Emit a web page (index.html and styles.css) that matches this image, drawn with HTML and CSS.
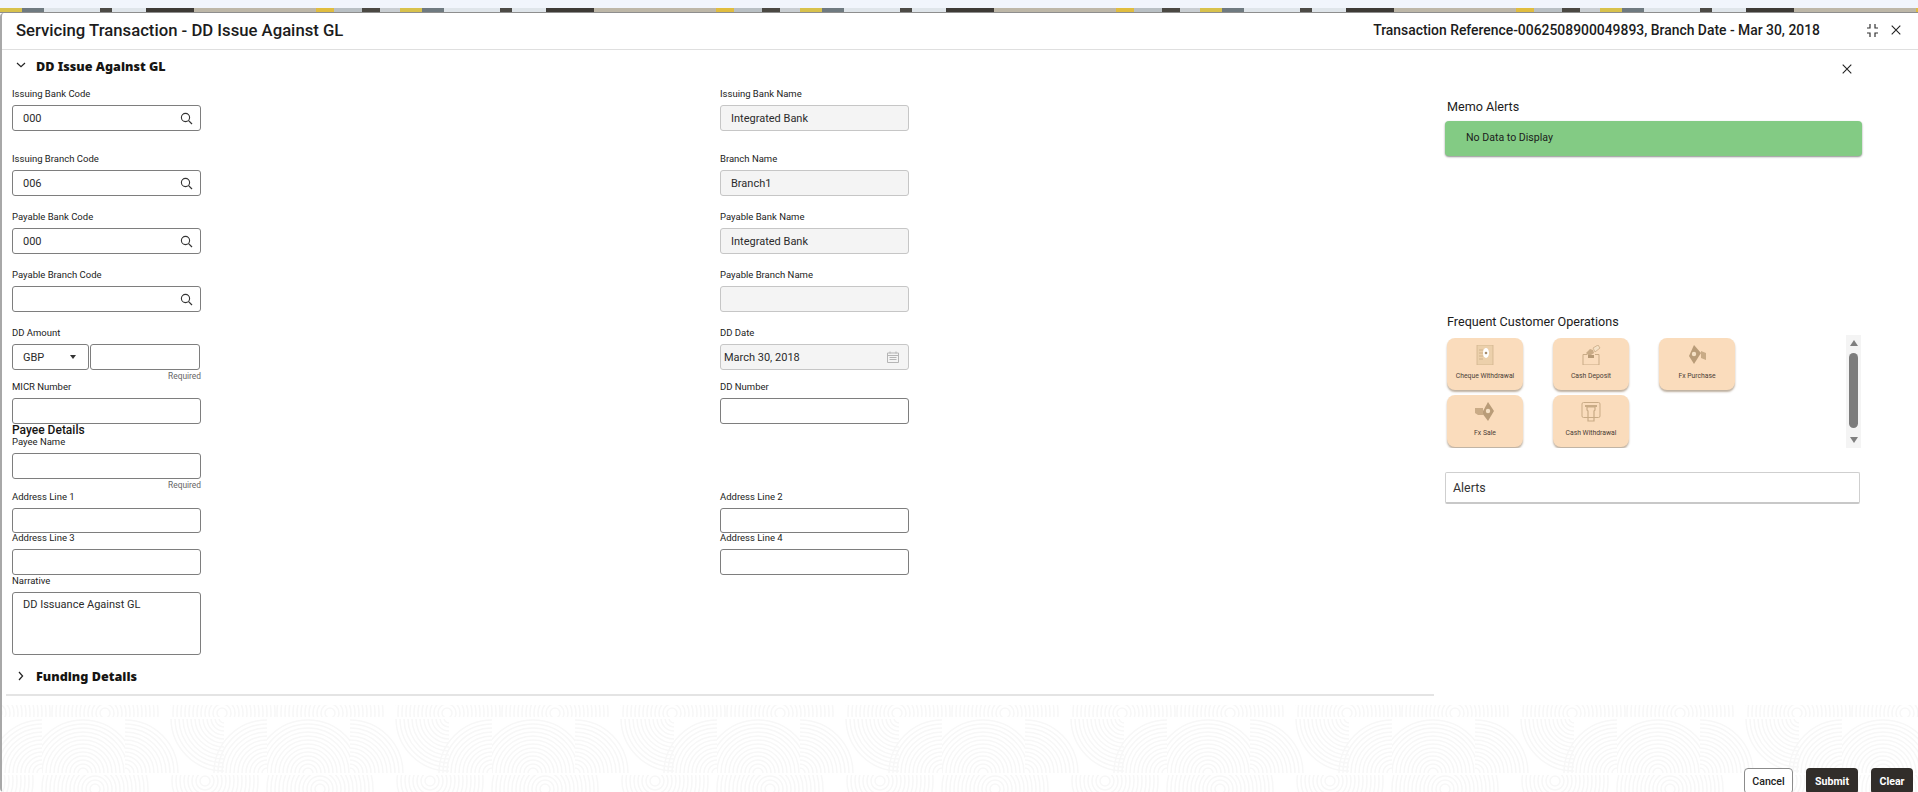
FILE: index.html
```html
<!DOCTYPE html>
<html lang="en">
<head>
<meta charset="utf-8">
<title>Servicing Transaction - DD Issue Against GL</title>
<link rel="stylesheet" href="styles.css">
</head>
<body>
<svg class="defs" width="0" height="0" aria-hidden="true">
  <defs>
    <symbol id="i-search" viewBox="0 0 13 13"><circle cx="5.5" cy="5.5" r="4.1" fill="none" stroke="#333" stroke-width="1.1"/><path d="M8.6 8.6 12 12" stroke="#333" stroke-width="1.2" fill="none"/></symbol>
    <symbol id="i-close" viewBox="0 0 10 10"><path d="M.7.7l8.6 8.6M9.3.7.7 9.3" stroke="#222" stroke-width="1.1" fill="none"/></symbol>
    <g id="rings" fill="none" stroke="#f7f7f7" stroke-width="1.5">
      <circle r="5"/><circle r="9"/><circle r="13"/><circle r="17"/><circle r="21"/><circle r="25"/><circle r="29"/><circle r="33"/><circle r="37"/><circle r="41"/><circle r="45"/><circle r="49"/><circle r="53"/>
    </g>
    <clipPath id="c1"><rect x="0" y="14" width="54" height="54"/></clipPath>
    <clipPath id="c2"><rect x="42" y="14" width="55" height="54"/></clipPath>
    <clipPath id="c3"><rect x="97" y="14" width="83" height="54"/></clipPath>
    <clipPath id="c4"><rect x="180" y="14" width="45" height="54"/></clipPath>
    <clipPath id="c5"><rect x="0" y="14" width="12" height="54"/></clipPath>
    <clipPath id="top"><rect x="0" y="0" width="225" height="12"/></clipPath>
    <clipPath id="bot"><rect x="0" y="70" width="225" height="17"/></clipPath>
    <pattern id="swirl" width="225" height="87" patternUnits="userSpaceOnUse" patternTransform="translate(168 0)">
      <g clip-path="url(#c1)"><use href="#rings" x="54" y="13"/></g>
      <g clip-path="url(#c2)"><use href="#rings" x="97" y="68"/></g>
      <g clip-path="url(#c3)"><use href="#rings" x="138" y="68"/></g>
      <g clip-path="url(#c4)"><use href="#rings" x="180" y="68"/></g>
      <g clip-path="url(#c5)"><use href="#rings" x="-45" y="68"/></g>
      <g clip-path="url(#top)"><use href="#rings" x="52" y="8"/><use href="#rings" x="160" y="8"/></g>
      <g clip-path="url(#bot)"><use href="#rings" x="35" y="76"/><use href="#rings" x="150" y="84"/></g>
    </pattern>
  </defs>
</svg>

<div class="banner"><div class="sky"></div><div class="photo"></div></div>

<div class="window">
  <header class="titlebar">
    <h1 class="title">Servicing Transaction - DD Issue Against GL</h1>
    <div class="meta">Transaction Reference-0062508900049893, Branch Date - Mar 30, 2018</div>
    <div class="win-tools">
      <svg class="i-collapse" viewBox="0 0 15 13" width="15" height="13"><path d="M5 0v4H2M10 0v4h3M5 13V9H2M10 13V9h3" fill="none" stroke="#333" stroke-width="1.2"/></svg>
      <svg class="i-x" width="10" height="10"><use href="#i-close"/></svg>
    </div>
  </header>

  <div class="content">
    <main class="main">
      <div class="section-head">
        <svg class="chev" viewBox="0 0 10 10" width="10" height="10"><path d="M1 3l4 3.6L9 3" fill="none" stroke="#222" stroke-width="1.2"/></svg>
        <h2 class="section-title">DD Issue Against GL</h2>
      </div>

      <div class="row r1">
        <div class="field"><div class="label">Issuing Bank Code</div><div class="control">000<svg class="i-search" width="13" height="13"><use href="#i-search"/></svg></div></div>
        <div class="field"><div class="label">Issuing Bank Name</div><div class="control ro">Integrated Bank</div></div>
      </div>
      <div class="row r2">
        <div class="field"><div class="label">Issuing Branch Code</div><div class="control">006<svg class="i-search" width="13" height="13"><use href="#i-search"/></svg></div></div>
        <div class="field"><div class="label">Branch Name</div><div class="control ro">Branch1</div></div>
      </div>
      <div class="row r3">
        <div class="field"><div class="label">Payable Bank Code</div><div class="control">000<svg class="i-search" width="13" height="13"><use href="#i-search"/></svg></div></div>
        <div class="field"><div class="label">Payable Bank Name</div><div class="control ro">Integrated Bank</div></div>
      </div>
      <div class="row r3">
        <div class="field"><div class="label">Payable Branch Code</div><div class="control"><svg class="i-search" width="13" height="13"><use href="#i-search"/></svg></div></div>
        <div class="field"><div class="label">Payable Branch Name</div><div class="control ro"></div></div>
      </div>
      <div class="row r3">
        <div class="field">
          <div class="label">DD Amount</div>
          <div class="amount">
            <div class="control select">GBP<span class="caret"></span></div>
            <div class="control value"></div>
          </div>
          <div class="hint">Required</div>
        </div>
        <div class="field"><div class="label">DD Date</div><div class="control ro date">March 30, 2018
          <svg class="i-cal" viewBox="0 0 12 12" width="12" height="12"><path d="M.5 2h11v9.5H.5zM.5 4.5h11M3 .5v2M9 .5v2M2.5 6.5h7M2.5 8.5h7" fill="none" stroke="#b5b5b5"/></svg></div></div>
      </div>
      <div class="row">
        <div class="field"><div class="label">MICR Number</div><div class="control"></div></div>
        <div class="field"><div class="label">DD Number</div><div class="control"></div></div>
      </div>
      <h3 class="subhead">Payee Details</h3>
      <div class="row">
        <div class="field"><div class="label">Payee Name</div><div class="control"></div><div class="hint">Required</div></div>
      </div>
      <div class="row r-addr">
        <div class="field"><div class="label">Address Line 1</div><div class="control"></div></div>
        <div class="field"><div class="label">Address Line 2</div><div class="control"></div></div>
      </div>
      <div class="row">
        <div class="field"><div class="label">Address Line 3</div><div class="control"></div></div>
        <div class="field"><div class="label">Address Line 4</div><div class="control"></div></div>
      </div>
      <div class="row r-narr">
        <div class="field"><div class="label">Narrative</div><div class="control area">DD Issuance Against GL</div></div>
      </div>

      <div class="section-head funding">
        <svg class="chev" viewBox="0 0 10 10" width="10" height="10"><path d="M3 1l3.6 4L3 9" fill="none" stroke="#222" stroke-width="1.2"/></svg>
        <h2 class="section-title">Funding Details</h2>
      </div>
    </main>

    <aside class="side">
      <div class="side-close"><svg width="10" height="10"><use href="#i-close"/></svg></div>
      <div class="side-title memo-title">Memo Alerts</div>
      <div class="memo-box">No Data to Display</div>
      <div class="side-title ops-title">Frequent Customer Operations</div>
      <div class="ops">
        <div class="ops-grid">
          <div class="card">
            <svg class="card-icon" viewBox="0 0 20 20" width="20" height="20"><rect x="2" y="0" width="16" height="20" fill="#ecd0ab" stroke="#d2b48f" stroke-width=".8"/><path d="M4 5h4M4 8h4M4 11h4M4 14h4" stroke="#c9ab86" stroke-width=".8"/><ellipse cx="11" cy="8" rx="3" ry="5" fill="#fff"/><circle cx="11" cy="8" r="1.3" fill="#a98d6c"/></svg>
            <div class="card-label">Cheque Withdrawal</div>
          </div>
          <div class="card">
            <svg class="card-icon" viewBox="0 0 20 20" width="20" height="20"><path d="M2 9.5h4M14 9.5h4M2 9.5V20h16V9.5" fill="none" stroke="#c9ab86"/><path d="M5 8l4-4 3 1 1 3-3 2H7z" fill="#c9ab86"/><path d="M12 3l5-3 2 3-5 4z" fill="#f5e1c6" stroke="#c9ab86" stroke-width=".8"/><rect x="7" y="10" width="6" height="3" fill="#b79a76"/></svg>
            <div class="card-label">Cash Deposit</div>
          </div>
          <div class="card">
            <svg class="card-icon" viewBox="0 0 20 20" width="20" height="20"><path d="M7 0l7 8-7 11-5-8z" fill="#b99c78"/><circle cx="7" cy="9" r="2.2" fill="#f5e1c6"/><path d="M14 6l5 2v7l-5-2z" fill="#c9ab86"/></svg>
            <div class="card-label">Fx Purchase</div>
          </div>
          <div class="card">
            <svg class="card-icon" viewBox="0 0 20 20" width="20" height="20"><path d="M13 0l6 9-6 10-6-8z" fill="#b99c78"/><circle cx="13" cy="9" r="2.2" fill="#f5e1c6"/><path d="M0 6h8v7H3L0 11z" fill="#c9ab86"/></svg>
            <div class="card-label">Fx Sale</div>
          </div>
          <div class="card">
            <svg class="card-icon" viewBox="0 0 20 20" width="20" height="20"><rect x="1" y="0.5" width="18" height="15" rx="1.5" fill="none" stroke="#c9ab86"/><path d="M4 3h12v2H4z" fill="#c9ab86"/><path d="M6 5h8v3l-1 1v10H7V9L6 8z" fill="none" stroke="#c9ab86" stroke-width="1.2"/></svg>
            <div class="card-label">Cash Withdrawal</div>
          </div>
        </div>
        <div class="scrollbar">
          <span class="arrow up"></span>
          <span class="thumb"></span>
          <span class="arrow down"></span>
        </div>
      </div>
      <div class="alerts">Alerts</div>
    </aside>
  </div>

  <footer class="footer">
    <svg class="swirl" width="100%" height="100%" aria-hidden="true"><rect width="100%" height="100%" fill="url(#swirl)"/></svg>
    <div class="actions">
      <button class="btn ghost" type="button">Cancel</button>
      <button class="btn solid" type="button">Submit</button>
      <button class="btn solid" type="button">Clear</button>
    </div>
  </footer>
</div>
</body>
</html>
```

FILE: styles.css
```css
* { box-sizing: border-box; }
html, body { margin: 0; height: 792px; overflow: hidden; }
body {
  font-family: Roboto, "Noto Sans", "DejaVu Sans", sans-serif;
  color: #1f1f1f;
  background: #fff;
  display: flex;
  flex-direction: column;
}
.defs { position: absolute; }

/* top strip */
.banner { height: 13px; flex: none; display: flex; flex-direction: column; }
.sky { height: 8px; background: #f1f5fc; }
.photo {
  height: 5px;
  border-bottom: 1px solid #8e8e8e;
  background:
    repeating-linear-gradient(90deg,
      #d8c24c 0 22px, #6f7a80 22px 44px, #dfe5ea 44px 100px, #4c4a46 100px 112px,
      #dfe5ea 112px 146px, #3d3a36 146px 194px, #bdb7a8 194px 316px,
      #e0bd3f 316px 334px, #b9c0c4 334px 362px, #4a4843 362px 380px, #c9ced2 380px 400px);
}

/* window */
.window {
  flex: 1;
  min-height: 0;
  display: flex;
  flex-direction: column;
  background: #fff;
  border-left: 2px solid #a8a8a8;
  border-top-left-radius: 4px;
  border-bottom-left-radius: 4px;
}
.titlebar {
  height: 37px;
  flex: none;
  display: flex;
  align-items: center;
  padding: 0 17px 2px 14px;
  border-bottom: 1px solid #dfdfdf;
}
.title { margin: 0; font-size: 16.7px; font-weight: 500; flex: 1; color: #1c1c1c; }
.meta { font-size: 13.9px; font-weight: 500; color: #1c1c1c; margin-right: 45px; }
.win-tools { display: flex; align-items: center; gap: 11px; }
.i-collapse, .i-x { display: block; }

.content { flex: 1; min-height: 0; display: flex; }

/* form */
.main { width: 1428px; flex: none; margin-left: 4px; border-bottom: 2px solid #e4e4e4; height: 646px; padding-left: 6px; }
.section-head { height: 32px; display: flex; align-items: center; gap: 10px; padding-left: 4px; }
.section-head.funding { margin-top: 6px; }
.chev { display: block; margin-top: -2px; }
.section-title { margin: 0; font-family: "Noto Sans", Roboto, sans-serif; font-size: 12.6px; font-weight: 900; color: #161513; }

.row { display: grid; grid-template-columns: 708px 189px; }
.r1 { margin-top: 7.3px; }
.r2 { margin-top: 23.5px; }
.r3 { margin-top: 16.5px; }
.r-narr { margin-top: .8px; }
.field { width: 189px; }
.label { height: 10px; line-height: 9px; margin-bottom: 6px; font-size: 9.5px; color: #222; white-space: nowrap; }
.control {
  position: relative;
  height: 25.5px;
  padding-left: 10px;
  display: flex;
  align-items: center;
  font-size: 11px;
  color: #2b2b2b;
  background: #fff;
  border: 1px solid #7e7e7e;
  border-radius: 3px;
}
.control.ro { background: #f4f4f4; border-color: #c6c6c6; }
.control.date { padding-left: 3px; justify-content: space-between; padding-right: 9px; }
.i-search { position: absolute; right: 7px; top: 5.5px; }
.i-cal { display: block; }
.amount { display: flex; gap: 1px; }
.select { width: 77px; flex: none; justify-content: flex-start; }
.caret { position: absolute; left: 57px; top: 10px; border: 3.5px solid transparent; border-top: 4px solid #333; border-bottom: 0; }
.value { width: 110px; flex: none; }
.hint { height: 12.5px; line-height: 13px; text-align: right; font-size: 8.4px; color: #666; }
.subhead { margin: 0; height: 13.5px; line-height: 13.5px; font-size: 12px; font-weight: 500; color: #161513; }
.r-addr { margin-top: .5px; }
.area { height: 63px; align-items: flex-start; padding-top: 5px; }

/* side panel */
.side { width: 417px; flex: none; margin-left: 11px; display: flex; flex-direction: column; }
.side-close { height: 38px; padding: 14px 0 0 397px; }
.side-close svg { display: block; }
.side-title { font-size: 12.6px; color: #1c1c1c; padding-left: 2px; line-height: 18px; font-weight: 400; }
.memo-title { margin-top: 10px; height: 23px; padding-top: 0; }
.memo-box {
  height: 35px;
  padding-left: 21px;
  padding-bottom: 2px;
  display: flex;
  align-items: center;
  background: #83cb84;
  border-radius: 4px;
  box-shadow: 0 1px 2px rgba(0,0,0,.45);
  font-size: 10.6px;
  color: #1c1c1c;
}
.ops-title { margin-top: 157px; height: 22px; }
.ops { height: 113px; position: relative; display: flex; overflow: hidden; }
.ops-grid {
  padding: 3px 0 0 2px;
  display: grid;
  grid-template-columns: repeat(3, 76px);
  grid-auto-rows: 52px;
  column-gap: 30px;
  row-gap: 5px;
  align-content: start;
}
.card {
  background: #fadcbc;
  border-radius: 8px;
  box-shadow: 0 2px 2px rgba(110,80,45,.45);
  display: flex;
  flex-direction: column;
  align-items: center;
  padding-top: 7px;
}
.card-icon { display: block; }
.card-label { margin-top: 6px; font-size: 6.8px; line-height: 11px; color: #4b4036; white-space: nowrap; }
.scrollbar {
  margin-left: auto;
  margin-right: 1px;
  width: 15px;
  background: #f4f4f4;
  display: flex;
  flex-direction: column;
  align-items: center;
}
.arrow { width: 0; height: 0; border-left: 4.5px solid transparent; border-right: 4.5px solid transparent; flex: none; }
.arrow.up { margin-top: 5px; border-bottom: 6px solid #7f7f7f; }
.arrow.down { margin-top: 9px; border-top: 6px solid #7f7f7f; }
.thumb { width: 9px; height: 75px; margin-top: 7px; background: #7c7c7c; border-radius: 4.5px; flex: none; }
.alerts {
  margin: 24px 1px 0 0;
  width: 415px;
  height: 32px;
  padding-left: 7px;
  display: flex;
  align-items: center;
  border: 1px solid #cfcfcf;
  border-bottom: 2px solid #c8c8c8;
  border-radius: 2px;
  font-size: 12.4px;
  color: #333;
}

/* footer */
.footer { height: 87px; flex: none; position: relative; display: flex; justify-content: flex-end; align-items: flex-start; overflow: hidden; }
.swirl { position: absolute; inset: 0; display: block; }
.actions { position: relative; margin-top: 63px; padding-right: 5px; display: flex; gap: 13px; }
.btn { height: 26px; padding: 0; border-radius: 4px; font-family: inherit; font-size: 10.6px; display: block; }
.btn.ghost { width: 49px; background: #fff; border: 1px solid #8c8c8c; color: #222; font-weight: 500; }
.btn.solid { width: 52px; background: #312d2a; border: 0; color: #fff; font-weight: 700; }
.btn.solid:last-child { width: 42px; }
```
